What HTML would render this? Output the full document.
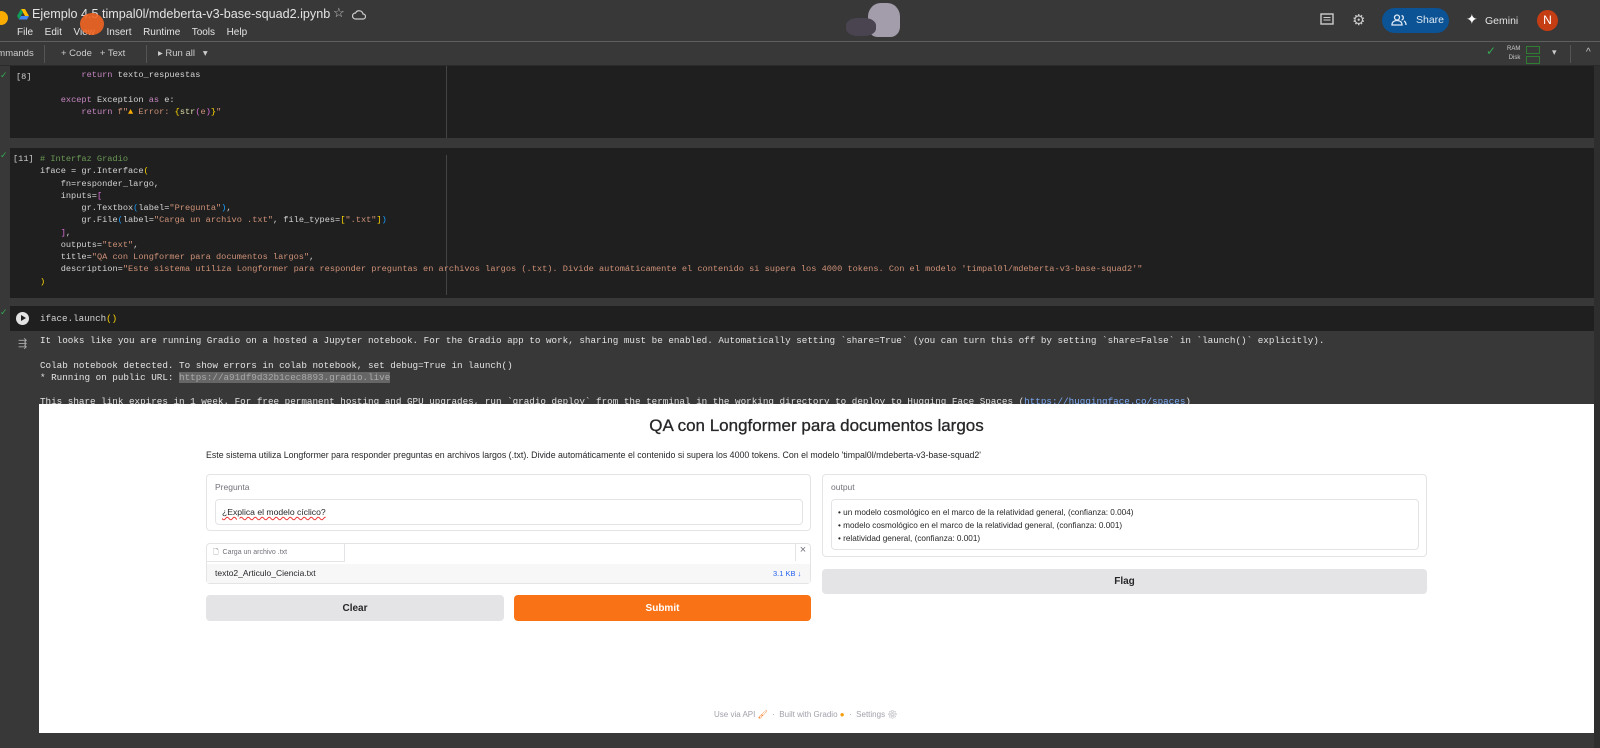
<!DOCTYPE html>
<html><head><meta charset="utf-8">
<style>
*{box-sizing:border-box;margin:0;padding:0}
body{width:1600px;height:748px;overflow:hidden;background:#383838;font-family:"Liberation Sans",sans-serif;position:relative;color:#e3e3e3}
.abs{position:absolute}
.mono{font-family:"Liberation Mono",monospace;font-size:8.65px;line-height:12.25px;white-space:pre;color:#d4d4d4}
.cell{position:absolute;left:10px;width:1584px;background:#1f1f1f}
.kw{color:#c586c0}.fn{color:#dcdcaa}.st{color:#ce9178}.cm{color:#6a9955}.br{color:#ffd700}.br2{color:#da70d6}.br3{color:#179fff}.vr{color:#9cdcfe}
.g{font-family:"Liberation Sans",sans-serif;color:#27272a}
.box{position:absolute;background:#fff;border:1px solid #e4e4e7;border-radius:4px}
.btn{position:absolute;border-radius:4px;font-weight:bold;font-size:10px;display:flex;align-items:center;justify-content:center}
</style></head><body>
<div class="abs" style="left:0;top:0;width:1600px;height:42px;background:#383838;border-bottom:1px solid #5f5f5f"></div>
<div class="abs" style="left:-6px;top:11px;width:14px;height:14px;border-radius:50%;background:#f9ab00"></div>
<svg class="abs" style="left:17px;top:9px" width="12" height="11" viewBox="0 0 12 11"><path d="M4 0h4l4 7H8z" fill="#ffba00"/><path d="M4 0L0 7l2 3.5L6 3z" fill="#0f9d58"/><path d="M2 10.5h8L12 7H4z" fill="#4285f4"/></svg>
<div class="abs" style="left:32px;top:7px;font-size:12.6px;color:#e3e3e3">Ejemplo 4.5 timpal0l/mdeberta-v3-base-squad2.ipynb</div>
<div class="abs" style="left:333px;top:5px;font-size:13px;color:#ccc">☆</div>
<svg class="abs" style="left:352px;top:9px" width="14" height="11" viewBox="0 0 14 11"><path d="M3.5 10a3 3 0 0 1 0-6 4 4 0 0 1 7.5 1 2.5 2.5 0 0 1 0 5z" fill="none" stroke="#ccc" stroke-width="1.2"/></svg>
<div class="abs" style="left:17px;top:27px;font-size:10px;color:#e3e3e3;word-spacing:3px">File&nbsp; Edit&nbsp; View&nbsp; Insert&nbsp; Runtime&nbsp; Tools&nbsp; Help</div>
<div class="abs" style="left:80px;top:13px;width:24px;height:22px;border-radius:50%;background:#f26522;opacity:.9"></div>
<div class="abs" style="left:868px;top:3px;width:32px;height:34px;border-radius:40% 40% 30% 30%;background:#a39cab"></div>
<div class="abs" style="left:846px;top:18px;width:30px;height:18px;border-radius:40%;background:#4a4450"></div>
<svg class="abs" style="left:1320px;top:13px" width="14" height="14" viewBox="0 0 14 14"><rect x="1" y="1" width="12" height="10" fill="none" stroke="#ccc" stroke-width="1.4"/><path d="M3.5 4.5h7M3.5 7h7" stroke="#ccc"/></svg>
<div class="abs" style="left:1352px;top:11px;font-size:15px;color:#ccc">⚙</div>
<div class="abs" style="left:1382px;top:8px;width:67px;height:25px;border-radius:13px;background:#0b5394;font-size:10.5px;color:#dfe9f5;padding:6px 0 0 34px">Share</div>
<svg class="abs" style="left:1391px;top:14px" width="16" height="12" viewBox="0 0 16 12"><circle cx="6" cy="3.5" r="2.5" fill="none" stroke="#dfe9f5" stroke-width="1.3"/><path d="M1 11c0-3 2-4.5 5-4.5s5 1.5 5 4.5z" fill="none" stroke="#dfe9f5" stroke-width="1.3"/><path d="M10.5 1.5a2.3 2.3 0 0 1 0 4.5M13 7c1.5.7 2 2 2 4" fill="none" stroke="#dfe9f5" stroke-width="1.3"/></svg>
<div class="abs" style="left:1466px;top:11px;font-size:14px;color:#fff">✦</div>
<div class="abs" style="left:1485px;top:15px;font-size:10.5px;color:#e3e3e3">Gemini</div>
<div class="abs" style="left:1537px;top:10px;width:21px;height:21px;border-radius:50%;background:#c53d13;color:#fff;font-size:12px;text-align:center;line-height:21px">N</div>
<div class="abs" style="left:0;top:43px;width:1600px;height:23px;background:#383838;border-bottom:1px solid #2a2a2a"></div>
<div class="abs" style="left:-8px;top:48px;font-size:9.5px;color:#ccc">ommands</div>
<div class="abs" style="left:44px;top:45px;width:1px;height:18px;background:#555"></div>
<div class="abs" style="left:61px;top:48px;font-size:9.5px;color:#ccc">+ Code&nbsp;&nbsp; + Text</div>
<div class="abs" style="left:146px;top:45px;width:1px;height:18px;background:#555"></div>
<div class="abs" style="left:158px;top:48px;font-size:9.5px;color:#ccc">▸ Run all&nbsp;&nbsp; ▾</div>
<div class="abs" style="left:1486px;top:44px;font-size:12px;color:#34a853">✓</div>
<div class="abs" style="left:1507px;top:45px;font-size:6px;line-height:9px;color:#ccc;text-align:right">RAM<br>Disk</div>
<div class="abs" style="left:1526px;top:46px;width:14px;height:8px;border:1px solid #2e7d32"></div>
<div class="abs" style="left:1526px;top:56px;width:14px;height:8px;border:1px solid #2e7d32"></div>
<div class="abs" style="left:1552px;top:47px;font-size:9px;color:#ccc">▾</div>
<div class="abs" style="left:1570px;top:45px;width:1px;height:18px;background:#555"></div>
<div class="abs" style="left:1586px;top:47px;font-size:10px;color:#ccc">^</div>
<div class="cell" style="top:66px;height:72px"></div>
<div class="abs" style="left:446px;top:66px;width:1px;height:72px;background:#444"></div>
<div class="abs" style="left:0;top:70px;font-size:9px;color:#34a853">✓</div>
<div class="abs mono" style="left:16px;top:71px;color:#ccc">[8]</div>
<div class="abs mono" style="left:40px;top:69px">        <span class="kw">return</span> texto_respuestas

    <span class="kw">except</span> Exception <span class="kw">as</span> e:
        <span class="kw">return</span> <span class="st">f"<span style="color:#f9ab00">▲</span> Error: <span class="br">{</span><span class="fn">str</span><span class="br2">(</span>e<span class="br2">)</span><span class="br">}</span>"</span></div>
<div class="cell" style="top:148px;height:150px"></div>
<div class="abs" style="left:446px;top:155px;width:1px;height:140px;background:#444"></div>
<div class="abs" style="left:0;top:150px;font-size:9px;color:#34a853">✓</div>
<div class="abs mono" style="left:13px;top:153px;color:#ccc">[11]</div>
<div class="abs mono" style="left:40px;top:153px"><span class="cm"># Interfaz Gradio</span>
iface = gr.Interface<span class="br">(</span>
    fn=responder_largo,
    inputs=<span class="br2">[</span>
        gr.Textbox<span class="br3">(</span>label=<span class="st">"Pregunta"</span><span class="br3">)</span>,
        gr.File<span class="br3">(</span>label=<span class="st">"Carga un archivo .txt"</span>, file_types=<span class="br">[</span><span class="st">".txt"</span><span class="br">]</span><span class="br3">)</span>
    <span class="br2">]</span>,
    outputs=<span class="st">"text"</span>,
    title=<span class="st">"QA con Longformer para documentos largos"</span>,
    description=<span class="st">"Este sistema utiliza Longformer para responder preguntas en archivos largos (.txt). Divide automáticamente el contenido si supera los 4000 tokens. Con el modelo 'timpal0l/mdeberta-v3-base-squad2'"</span>
<span class="br">)</span></div>
<div class="cell" style="top:306px;height:25px"></div>
<div class="abs" style="left:0;top:307px;font-size:9px;color:#34a853">✓</div>
<div class="abs" style="left:16px;top:312px;width:13px;height:13px;border-radius:50%;background:#e3e3e3"></div>
<div class="abs" style="left:21px;top:315px;width:0;height:0;border-left:5px solid #1f1f1f;border-top:3.5px solid transparent;border-bottom:3.5px solid transparent"></div>
<div class="abs mono" style="left:40px;top:313px;font-size:9.2px">iface.launch<span class="br">()</span></div>
<div class="abs" style="left:18px;top:337px;font-size:11px;color:#aaa">⇶</div>
<div class="abs mono" style="left:40px;top:335px;color:#e3e3e3;font-size:9.28px">It looks like you are running Gradio on a hosted a Jupyter notebook. For the Gradio app to work, sharing must be enabled. Automatically setting `share=True` (you can turn this off by setting `share=False` in `launch()` explicitly).

Colab notebook detected. To show errors in colab notebook, set debug=True in launch()
* Running on public URL: <span style="background:#666;color:#aaa">https://a91df9d32b1cec8893.gradio.live</span>

This share link expires in 1 week. For free permanent hosting and GPU upgrades, run `gradio deploy` from the terminal in the working directory to deploy to Hugging Face Spaces (<span style="color:#7cacf8;text-decoration:underline">https://huggingface.co/spaces</span>)</div>
<div class="abs" style="left:39px;top:404px;width:1555px;height:329px;background:#fff"></div>
<div class="abs g" style="left:39px;top:416px;width:1555px;text-align:center;font-size:17px;color:#27272a;-webkit-text-stroke:0.3px #27272a">QA con Longformer para documentos largos</div>
<div class="abs g" style="left:206px;top:450px;font-size:8.8px">Este sistema utiliza Longformer para responder preguntas en archivos largos (.txt). Divide automáticamente el contenido si supera los 4000 tokens. Con el modelo 'timpal0l/mdeberta-v3-base-squad2'</div>
<div class="box" style="left:206px;top:474px;width:605px;height:57px"></div>
<div class="abs g" style="left:215px;top:482px;font-size:8.5px;color:#71717a">Pregunta</div>
<div class="box" style="left:215px;top:499px;width:588px;height:26px"></div>
<div class="abs g" style="left:222px;top:507px;font-size:8.6px;text-decoration:underline wavy #e33;text-decoration-thickness:1px">¿Explica el modelo cíclico?</div>
<div class="box" style="left:206px;top:543px;width:605px;height:41px"></div>
<div class="abs" style="left:207px;top:544px;width:138px;height:18px;border-right:1px solid #e4e4e7;border-bottom:1px solid #e4e4e7"></div>
<div class="abs g" style="left:213px;top:548px;font-size:7px;color:#71717a">🗋 &nbsp;Carga un archivo .txt</div>
<div class="abs" style="left:795px;top:544px;width:15px;height:17px;border-left:1px solid #e4e4e7;font-size:11px;color:#71717a;text-align:center">×</div>
<div class="abs" style="left:207px;top:564px;width:603px;height:19px;background:#f7f7f8"></div>
<div class="abs g" style="left:215px;top:568px;font-size:8.5px">texto2_Articulo_Ciencia.txt</div>
<div class="abs g" style="left:773px;top:569px;font-size:7.5px;color:#2563eb">3.1 KB ↓</div>
<div class="btn g" style="left:206px;top:595px;width:298px;height:26px;background:#e4e4e7">Clear</div>
<div class="btn" style="left:514px;top:595px;width:297px;height:26px;background:#f97316;color:#fff">Submit</div>
<div class="box" style="left:822px;top:474px;width:605px;height:83px"></div>
<div class="abs g" style="left:831px;top:482px;font-size:8.5px;color:#71717a">output</div>
<div class="box" style="left:831px;top:499px;width:588px;height:51px"></div>
<div class="abs g" style="left:838px;top:506px;font-size:8.2px;line-height:13px">• un modelo cosmológico en el marco de la relatividad general, (confianza: 0.004)<br>• modelo cosmológico en el marco de la relatividad general, (confianza: 0.001)<br>• relatividad general, (confianza: 0.001)</div>
<div class="btn g" style="left:822px;top:569px;width:605px;height:25px;background:#e4e4e7">Flag</div>
<div class="abs g" style="left:714px;top:710px;font-size:8px;color:#a1a1aa">Use via API <span style="color:#f97316">🖌</span> &nbsp;·&nbsp; Built with Gradio <span style="color:#f59e0b">●</span> &nbsp;·&nbsp; Settings ⚙</div>
<div class="abs" style="left:1594px;top:66px;width:6px;height:682px;background:#2e2e2e"></div>
</body></html>
